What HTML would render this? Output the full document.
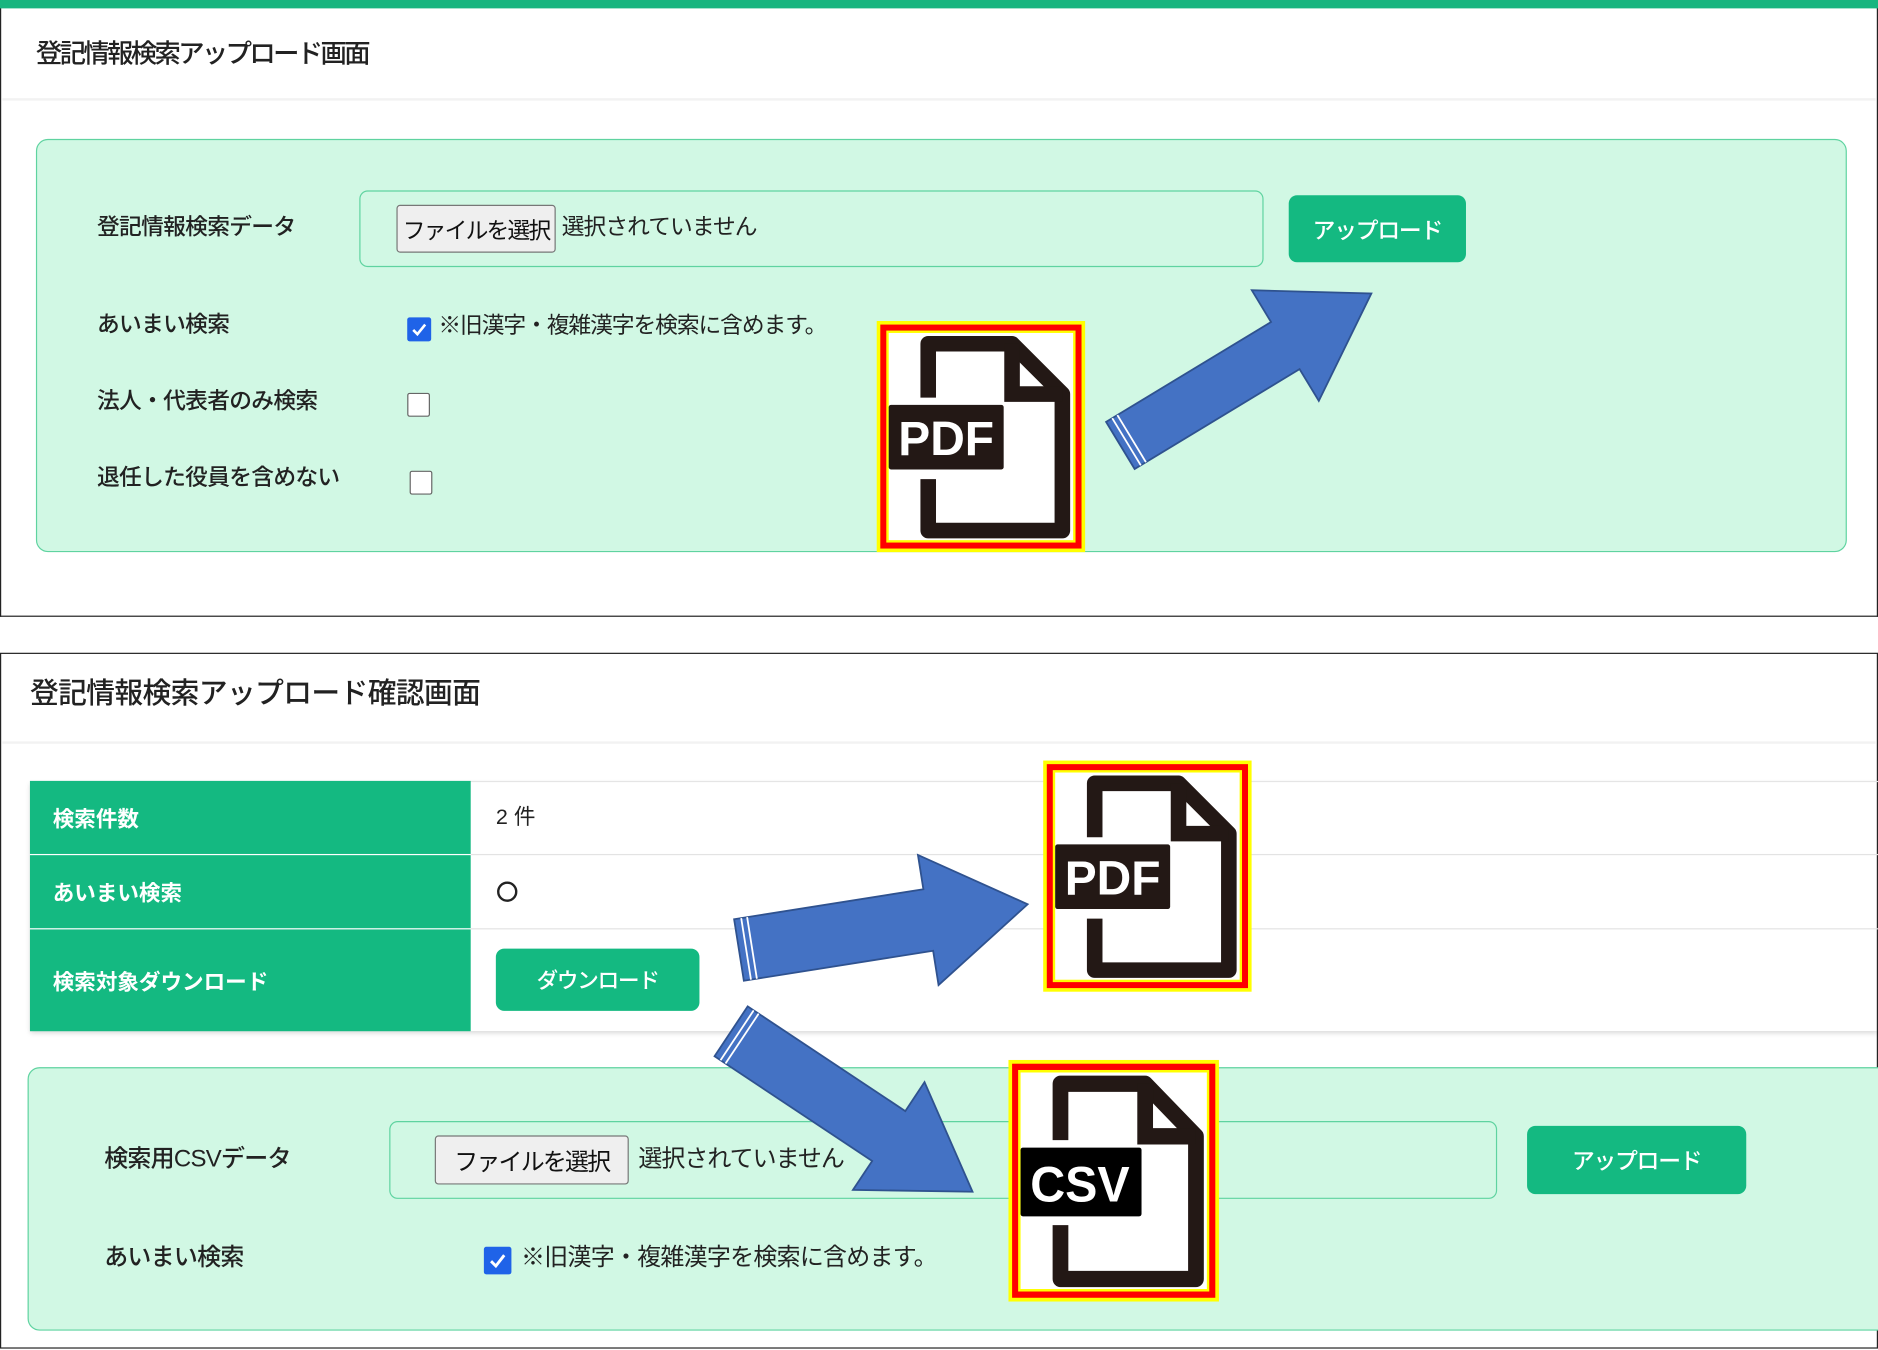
<!DOCTYPE html>
<html><head><meta charset="utf-8"><style>
*{box-sizing:border-box;margin:0;padding:0}
html,body{width:1878px;height:1350px;overflow:hidden;background:#fff}
body{font-family:"Liberation Sans","Noto Sans CJK JP",sans-serif;color:#222}
#w{position:absolute;left:0;top:0;width:1568px;height:1127px;transform:scale(1.19770);transform-origin:0 0}
.a{position:absolute}
.t{position:absolute;white-space:nowrap;line-height:1}
.lab{font-size:19px;font-weight:500;color:#222;letter-spacing:-0.6px}
.box{position:absolute;background:#d1f8e4;border:1.5px solid #5fd3a0;border-radius:10px}
.fbox{position:absolute;border:1.5px solid #5fd3a0;border-radius:7px}
.fbtn{position:absolute;background:#efefef;border:1px solid #777;border-radius:3px;font-size:19px;display:flex;align-items:center;justify-content:center;color:#111;white-space:nowrap;letter-spacing:-1.5px}
.gbtn{position:absolute;background:#14b981;border-radius:7px;color:#fff;font-size:19px;display:flex;align-items:center;justify-content:center;font-weight:500;white-space:nowrap;letter-spacing:-1px}
.cb{position:absolute;width:19px;height:20px;border:1.5px solid #666;background:#fff;border-radius:2px}
.cbon{position:absolute;width:20px;height:20px;background:#1f63e8;border-radius:2px}
.th{position:absolute;left:25px;width:368px;background:#14b981;color:#fff;font-size:18px;font-weight:700;padding-left:19px;display:flex;align-items:center}
</style></head><body><div id="w">

<div class="a" style="left:0;top:0;width:1568px;height:515px;border-left:1.5px solid #222;border-right:1.5px solid #222;border-bottom:1.5px solid #222"></div>
<div class="a" style="left:0;top:0;width:1568px;height:7px;background:#18b57f"></div>
<div class="t" style="left:30px;top:34px;font-size:22px;font-weight:500;letter-spacing:-2.2px">登記情報検索アップロード画面</div>
<div class="a" style="left:2px;top:82px;width:1564px;height:2px;background:#f2f2f2"></div>
<div class="box" style="left:30px;top:116px;width:1512px;height:345px"></div>
<div class="t lab" style="left:81px;top:181px">登記情報検索データ</div>
<div class="fbox" style="left:300px;top:159px;width:755px;height:64px"></div>
<div class="fbtn" style="left:331px;top:171px;width:133px;height:40px">ファイルを選択</div>
<div class="t" style="left:469px;top:181px;font-size:19px;letter-spacing:-0.8px">選択されていません</div>
<div class="gbtn" style="left:1076px;top:163px;width:148px;height:56px">アップロード</div>
<div class="t lab" style="left:81px;top:262px">あいまい検索</div>
<div class="cbon" style="left:340px;top:265px"><svg width="20" height="20"><path d="M5 10.5l3.5 3.5 6.5-8" stroke="#fff" stroke-width="2.2" fill="none"/></svg></div>
<div class="t" style="left:366px;top:263px;font-size:19px;letter-spacing:-0.9px">※旧漢字・複雑漢字を検索に含めます。</div>
<div class="t lab" style="left:81px;top:326px">法人・代表者のみ検索</div>
<div class="cb" style="left:340px;top:328px"></div>
<div class="t lab" style="left:81px;top:390px">退任した役員を含めない</div>
<div class="cb" style="left:342px;top:393px"></div>

<div class="a" style="left:0;top:545px;width:1568px;height:581px;border:1.5px solid #222"></div>
<div class="t" style="left:25px;top:568px;font-size:24px;font-weight:500;letter-spacing:-0.5px">登記情報検索アップロード確認画面</div>
<div class="a" style="left:2px;top:619px;width:1564px;height:2px;background:#f2f2f2"></div>
<div class="a" style="left:25px;top:652px;width:1543px;height:209px;box-shadow:0 2px 4px rgba(0,0,0,.15);border-top:1px solid #e5e5e5"></div>
<div class="th" style="top:652px;height:61px">検索件数</div>
<div class="th" style="top:714px;height:61px">あいまい検索</div>
<div class="th" style="top:776px;height:85px">検索対象ダウンロード</div>
<div class="a" style="left:393px;top:713px;width:1175px;height:1px;background:#e3e3e3"></div>
<div class="a" style="left:393px;top:775px;width:1175px;height:1px;background:#e3e3e3"></div>
<div class="t" style="left:414px;top:673px;font-size:18px">2 件</div>
<div class="a" style="left:415px;top:736px;width:17px;height:17px;border:2px solid #222;border-radius:50%"></div>
<div class="gbtn" style="left:414px;top:792px;width:170px;height:52px;font-size:18px">ダウンロード</div>
<div class="box" style="left:23px;top:891px;width:1560px;height:220px"></div>
<div class="t lab" style="left:87px;top:958px;font-size:20px">検索用CSVデータ</div>
<div class="fbox" style="left:325px;top:936px;width:925px;height:65px"></div>
<div class="fbtn" style="left:363px;top:948px;width:162px;height:41px;font-size:20px">ファイルを選択</div>
<div class="t" style="left:533px;top:958px;font-size:20px;letter-spacing:-0.8px">選択されていません</div>
<div class="gbtn" style="left:1275px;top:940px;width:183px;height:57px">アップロード</div>
<div class="t lab" style="left:87px;top:1040px;font-size:20px">あいまい検索</div>
<div class="cbon" style="left:404px;top:1041px;width:23px;height:23px"><svg width="23" height="23"><path d="M6 12l4 4 7-9" stroke="#fff" stroke-width="2.4" fill="none"/></svg></div>
<div class="t" style="left:435px;top:1040px;font-size:20px;letter-spacing:-0.6px">※旧漢字・複雑漢字を検索に含めます。</div>

<svg class="a" style="left:0;top:0" width="1568" height="1127">
<defs>
<g id="doc">
<rect x="0" y="0" width="174" height="193" fill="#ffff00"/>
<rect x="3" y="3" width="168" height="187" fill="#ff0000"/>
<rect x="8" y="8" width="158" height="177" fill="#ffff00"/>
<rect x="10" y="10" width="154" height="173" fill="#fff"/>
<path d="M43,64 V19 H113 L155,61 V175 H43 V132" fill="none" stroke="#231815" stroke-width="13" stroke-linejoin="round"/>
<path d="M113,19 V61 H155" fill="none" stroke="#231815" stroke-width="13"/>
</g>
</defs>
<g transform="translate(1145,245) rotate(-31.2)">
<polygon points="-245,-23 -84,-23 -84,-54 0,0 -84,54 -84,23 -245,23" fill="#4472c4" stroke="#2f528f" stroke-width="1.5"/>
<line x1="-239" y1="-23" x2="-239" y2="23" stroke="#fff" stroke-width="1.5"/><line x1="-234" y1="-23" x2="-234" y2="23" stroke="#fff" stroke-width="1.5"/>
</g>
<g transform="translate(858,755) rotate(-9)">
<polygon points="-244,-26 -84,-26 -84,-55 0,0 -84,55 -84,26 -244,26" fill="#4472c4" stroke="#2f528f" stroke-width="1.5"/>
<line x1="-238" y1="-26" x2="-238" y2="26" stroke="#fff" stroke-width="1.5"/><line x1="-233" y1="-26" x2="-233" y2="26" stroke="#fff" stroke-width="1.5"/>
</g>
<g transform="translate(812,995) rotate(33.6)">
<polygon points="-242,-25 -84,-25 -84,-54 0,0 -84,54 -84,25 -242,25" fill="#4472c4" stroke="#2f528f" stroke-width="1.5"/>
<line x1="-236" y1="-25" x2="-236" y2="25" stroke="#fff" stroke-width="1.5"/><line x1="-231" y1="-25" x2="-231" y2="25" stroke="#fff" stroke-width="1.5"/>
</g>
<g transform="translate(732,268)"><use href="#doc"/><rect x="10" y="70" width="96" height="54" rx="2" fill="#231815"/><text x="18" y="112" font-family="Liberation Sans,sans-serif" font-weight="700" font-size="40" fill="#fff">PDF</text></g>
<g transform="translate(871,635)"><use href="#doc"/><rect x="10" y="70" width="96" height="54" rx="2" fill="#231815"/><text x="18" y="112" font-family="Liberation Sans,sans-serif" font-weight="700" font-size="40" fill="#fff">PDF</text></g>
<g transform="translate(842,885) scale(1.01,1.045)"><use href="#doc"/><rect x="10" y="70" width="100" height="55" rx="2" fill="#000"/><text x="18" y="113" font-family="Liberation Sans,sans-serif" font-weight="700" font-size="40" fill="#fff">CSV</text></g>
</svg>
</div></body></html>
